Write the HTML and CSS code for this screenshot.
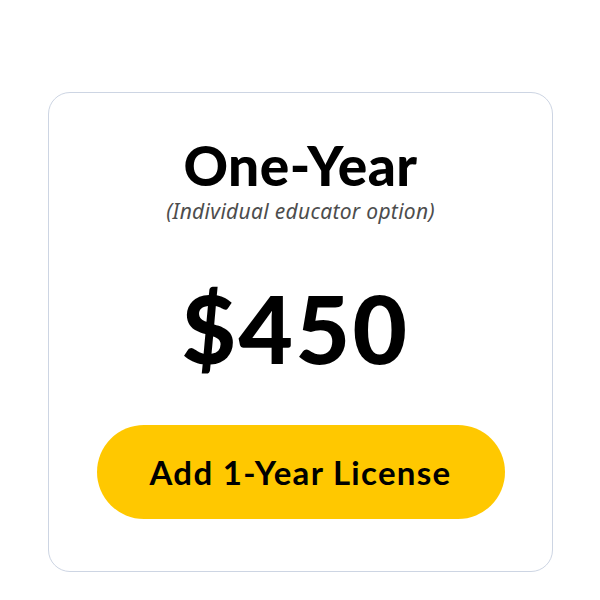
FILE: index.html
```html
<!DOCTYPE html>
<html>
<head>
<meta charset="utf-8">
<link rel="stylesheet" href="styles.css">
</head>
<body>
<div class="page">
  <div class="card">
    <h2 class="title">One-Year</h2>
    <p class="subtitle">(Individual educator option)</p>
    <div class="price">$450</div>
    <button class="cta">Add 1-Year License</button>
  </div>
</div>
</body>
</html>
```
FILE: styles.css
```css
html, body {
  margin: 0;
  padding: 0;
  background: #ffffff;
}
.page {
  padding: 92px 0 0 48px;
}
.card {
  box-sizing: border-box;
  width: 505px;
  height: 480px;
  border: 1px solid #cdd5e3;
  border-radius: 22px;
  background: #fff;
  display: flex;
  flex-direction: column;
  align-items: center;
  padding: 40px 48px 0;
  font-family: Lato, "Noto Sans", sans-serif;
  color: #000;
}
.title {
  margin: 0;
  font-size: 55px;
  font-weight: 900;
  line-height: 64px;
  letter-spacing: 0.5px;
}
.subtitle {
  margin: 2px 0 0;
  font-family: "Noto Sans", sans-serif;
  font-size: 21px;
  font-style: italic;
  color: #4d4d4d;
  line-height: 24px;
  letter-spacing: 0.3px;
}
.price {
  margin-top: 55px;
  margin-right: 10px;
  font-size: 94px;
  font-weight: 900;
  line-height: 100px;
  letter-spacing: 2.5px;
}
.cta {
  margin-top: 47px;
  width: 408px;
  height: 94px;
  border: none;
  border-radius: 47px;
  background: #ffc800;
  font-family: Lato, "Noto Sans", sans-serif;
  font-weight: 700;
  font-size: 33px;
  letter-spacing: 1.3px;
  color: #000;
  cursor: pointer;
}
```
